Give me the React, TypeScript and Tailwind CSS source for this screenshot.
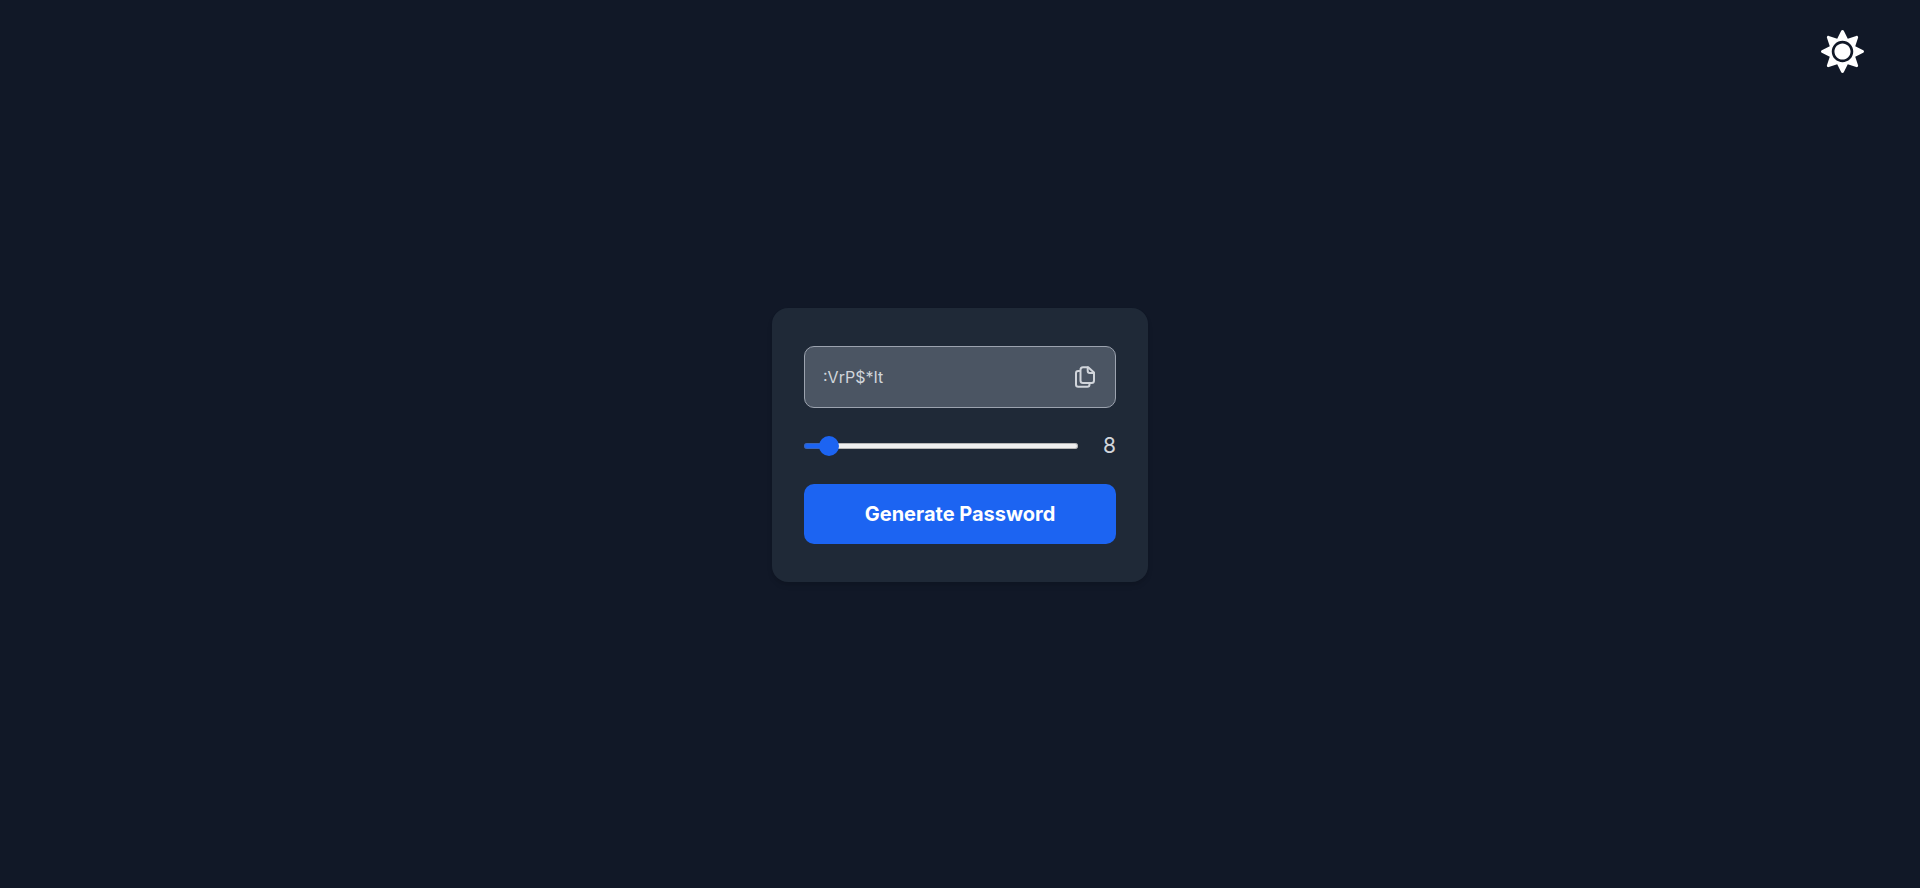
import { useState } from "react";
import { FaSun } from "react-icons/fa";

const MIN = 6;
const MAX = 40;
const CHARS =
  "ABCDEFGHIJKLMNOPQRSTUVWXYZabcdefghijklmnopqrstuvwxyz0123456789!@#$%^&*:;?";

function generate(length: number) {
  return Array.from(
    { length },
    () => CHARS[Math.floor(Math.random() * CHARS.length)],
  ).join("");
}

function CopyIcon() {
  return (
    <svg
      viewBox="0 0 20 22"
      className="h-[22px] w-5"
      fill="none"
      stroke="currentColor"
      strokeWidth="2"
      strokeLinecap="round"
      strokeLinejoin="round"
      aria-hidden="true"
    >
      <path d="M4.3 5H3.2C1.9 5 1 5.9 1 7.2V18.6C1 19.9 1.9 20.8 3.2 20.8H12.3C13.6 20.8 14.5 19.9 14.5 18.6V17.4" />
      <path d="M13.2 1.2H8C6.5 1.2 5.5 2.2 5.5 3.7V14.5C5.5 16 6.500 17 8 17H16.5C18 17 19 16 19 14.500V6.6Z" />
      <path d="M12.7 1.4V4.7C12.7 6 13.5 6.9 14.9 6.9H18.7" />
    </svg>
  );
}

export default function App() {
  const [dark, setDark] = useState(true);
  const [length, setLength] = useState(8);
  const [password, setPassword] = useState(":VrP$*It");

  const ratio = (length - MIN) / (MAX - MIN);
  const fill = `calc(10px + (100% - 20px) * ${ratio})`;

  return (
    <div
      className={`flex min-h-screen flex-col items-center justify-center px-4 font-['Inter',sans-serif] ${dark ? "bg-[#111827]" : "bg-gray-100"}`}
    >
      <button
        type="button"
        aria-label="Toggle theme"
        onClick={() => setDark(!dark)}
        className={`absolute top-[30px] right-14 text-[43px] ${dark ? "text-white" : "text-gray-800"}`}
      >
        <FaSun />
      </button>

      <main className="mt-px flex w-full max-w-[376px] flex-col gap-6 rounded-2xl bg-[#1f2937] px-8 py-[38px] shadow-md">
        <div className="flex h-[62px] items-center rounded-[10px] border border-[#9ca3af] bg-[#4b5563] pr-5 pl-[18px] text-[#d1d5db]">
          <input
            type="text"
            readOnly
            aria-label="Password"
            value={password}
            className="min-w-0 flex-1 bg-transparent text-base outline-none"
          />
          <button
            type="button"
            aria-label="Copy password"
            onClick={() => navigator.clipboard?.writeText(password)}
          >
            <CopyIcon />
          </button>
        </div>

        <div className="flex h-7 items-center justify-between gap-6">
          <input
            type="range"
            aria-label="Password length"
            min={MIN}
            max={MAX}
            value={length}
            onChange={(e) => setLength(Number(e.target.value))}
            style={{
              backgroundImage: `linear-gradient(to right, #1c64f2 ${fill}, #efefef ${fill})`,
            }}
            className="h-[6px] max-w-[274px] min-w-0 flex-1 cursor-pointer appearance-none rounded-sm shadow-[inset_0_0_0_1px_rgba(100,100,100,0.4)] [&::-webkit-slider-thumb]:size-5 [&::-webkit-slider-thumb]:appearance-none [&::-webkit-slider-thumb]:rounded-full [&::-webkit-slider-thumb]:bg-[#1c64f2]"
          />
          <span className="text-[21px] leading-7 text-[#d1d5db]">{length}</span>
        </div>

        <button
          type="button"
          onClick={() => setPassword(generate(length))}
          className="h-[60px] rounded-[10px] bg-[#1c64f2] text-xl font-bold text-white"
        >
          Generate Password
        </button>
      </main>
    </div>
  );
}
